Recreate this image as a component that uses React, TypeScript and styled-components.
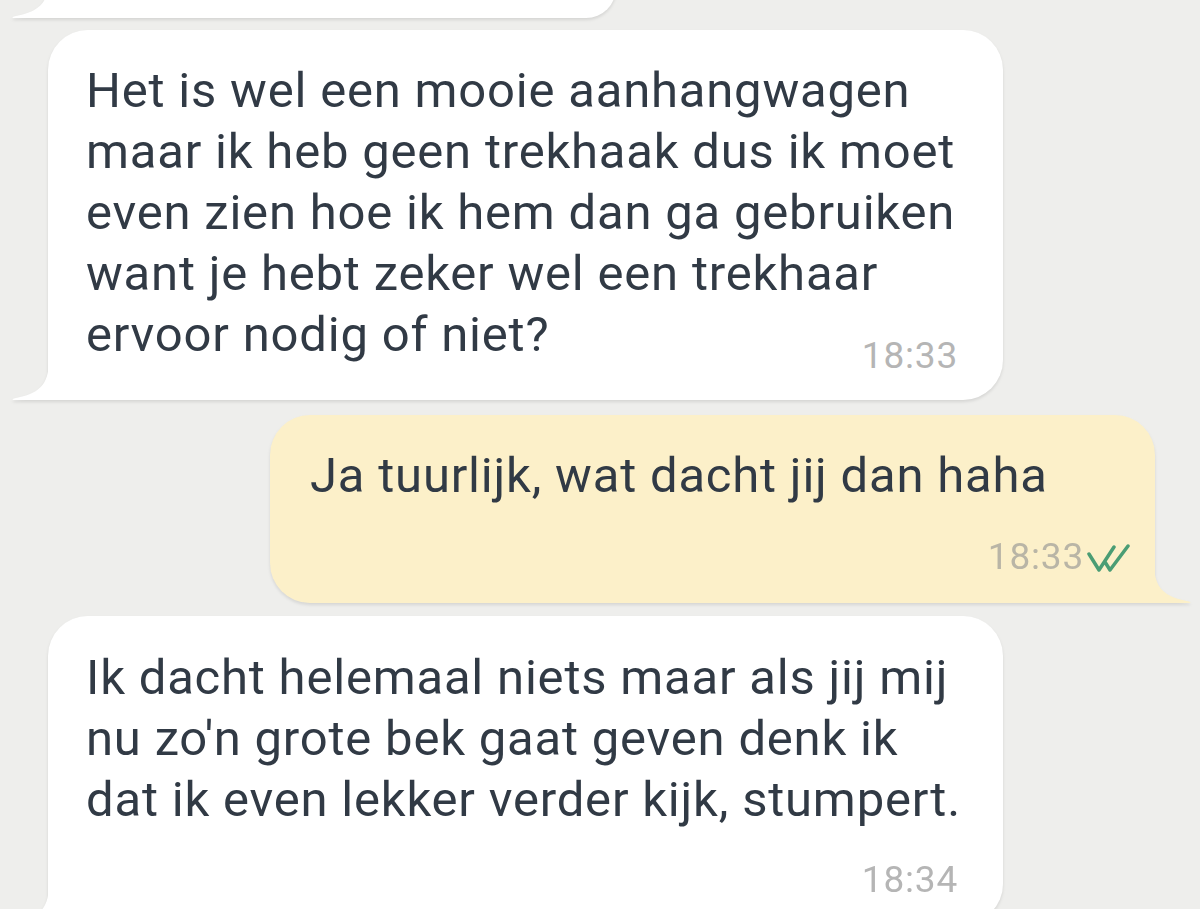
import React from 'react';
import styled, { createGlobalStyle } from 'styled-components';

const GlobalStyle = createGlobalStyle`
  html, body {
    margin: 0;
    padding: 0;
    background: #eeeeec;
    overflow: hidden;
  }
  body {
    font-family: Roboto, 'Noto Sans', sans-serif;
  }
`;

const Screen = styled.div`
  width: 1200px;
  height: 909px;
  overflow: hidden;
  background: #eeeeec;
  display: flex;
  flex-direction: column;
`;

const Row = styled.div<{ $out?: boolean; $gap: number }>`
  display: flex;
  justify-content: ${(p) => (p.$out ? 'flex-end' : 'flex-start')};
  padding: ${(p) => (p.$out ? '0 45px 0 0' : '0 0 0 48px')};
  margin-top: ${(p) => p.$gap}px;
  flex-shrink: 0;
`;

const Bubble = styled.div<{ $out?: boolean; $width: number }>`
  position: relative;
  width: ${(p) => p.$width}px;
  box-sizing: border-box;
  background: ${(p) => (p.$out ? '#fcf0c9' : '#ffffff')};
  border-radius: ${(p) => (p.$out ? '40px 40px 0 40px' : '40px 40px 40px 0')};
  filter: drop-shadow(0 2px 1.5px rgba(0, 0, 0, 0.1));
`;

const Tail = styled.svg<{ $out?: boolean }>`
  position: absolute;
  bottom: 0;
  width: 38px;
  height: 40px;
  ${(p) => (p.$out ? 'right: -36px; transform: scaleX(-1);' : 'left: -36px;')}
`;

const Body = styled.div<{ $pad: string }>`
  padding: ${(p) => p.$pad};
`;

const Text = styled.div`
  font-size: 49px;
  line-height: 61px;
  letter-spacing: 0.8px;
  color: #313a45;
  white-space: nowrap;
`;

const Meta = styled.div<{ $shift: number }>`
  display: flex;
  justify-content: flex-end;
  align-items: center;
  gap: 3px;
  margin-top: ${(p) => p.$shift}px;
`;

const Time = styled.span<{ $out?: boolean }>`
  font-size: 37px;
  line-height: 37px;
  letter-spacing: 0.8px;
  color: ${(p) => (p.$out ? '#b9b5a6' : '#b5b5b5')};
`;

const Checks = styled.svg`
  width: 43px;
  height: 29px;
  margin-top: 3px;
`;

function BubbleTail({ out, fill }: { out?: boolean; fill: string }) {
  return (
    <Tail $out={out} viewBox="0 0 38 40">
      <path d="M37 0 L38 0 L38 40 L2 40 C0 40 0 39 2 38.5 C26 34 37 26 37 0 Z" fill={fill} />
    </Tail>
  );
}

export default function App() {
  return (
    <>
      <GlobalStyle />
      <Screen>
        <Row $gap={-42}>
          <Bubble $width={568} style={{ height: 60 }}>
            <BubbleTail fill="#ffffff" />
          </Bubble>
        </Row>

        <Row $gap={12}>
          <Bubble $width={955}>
            <Body $pad="30px 45px 26px 38px">
              <Text>
                Het is wel een mooie aanhangwagen
                <br />
                maar ik heb geen trekhaak dus ik moet
                <br />
                even zien hoe ik hem dan ga gebruiken
                <br />
                want je hebt zeker wel een trekhaar
                <br />
                ervoor nodig of niet?
              </Text>
              <Meta $shift={-28}>
                <Time>18:33</Time>
              </Meta>
            </Body>
            <BubbleTail fill="#ffffff" />
          </Bubble>
        </Row>

        <Row $gap={15} $out>
          <Bubble $width={885} $out>
            <Body $pad="30px 25px 28px 40px">
              <Text>Ja tuurlijk, wat dacht jij dan haha</Text>
              <Meta $shift={32}>
                <Time $out>18:33</Time>
                <Checks viewBox="0 0 43 29">
                  <path
                    d="M2 10 L12 26 L27 3 M18 18 L23 26 L41 2"
                    fill="none"
                    stroke="#4a9d74"
                    strokeWidth="3.5"
                    strokeLinecap="round"
                    strokeLinejoin="round"
                  />
                </Checks>
              </Meta>
            </Body>
            <BubbleTail out fill="#fcf0c9" />
          </Bubble>
        </Row>

        <Row $gap={13}>
          <Bubble $width={955}>
            <Body $pad="31px 45px 26px 38px">
              <Text>
                Ik dacht helemaal niets maar als jij mij
                <br />
                nu zo'n grote bek gaat geven denk ik
                <br />
                dat ik even lekker verder kijk, stumpert.
              </Text>
              <Meta $shift={31}>
                <Time>18:34</Time>
              </Meta>
            </Body>
            <BubbleTail fill="#ffffff" />
          </Bubble>
        </Row>
      </Screen>
    </>
  );
}
